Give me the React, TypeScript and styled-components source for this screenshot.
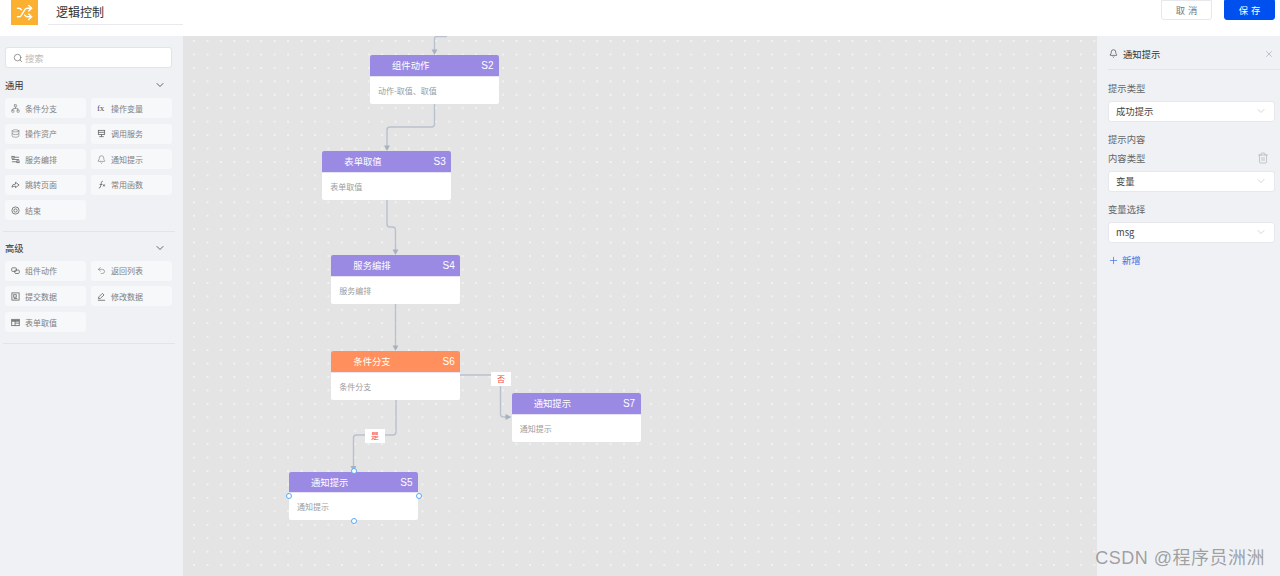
import React from "react";
import styled, { createGlobalStyle } from "styled-components";
import {
  Bell,
  ChevronDown,
  Database,
  Network,
  Plus,
  Search,
  Shuffle,
  Trash2,
  Undo2,
  X,
} from "lucide-react";

const GlobalStyle = createGlobalStyle`
  html, body {
    margin: 0;
    padding: 0;
    height: 100%;
    overflow: hidden;
    background: #eff1f5;
    font-family: "Noto Sans CJK SC", "Liberation Sans", sans-serif;
  }
`;

const LATIN = `"Liberation Sans", "Noto Sans CJK SC", sans-serif`;

const Page = styled.div`
  width: 1280px;
  height: 576px;
  display: flex;
  flex-direction: column;
  position: relative;
  overflow: hidden;
`;

const Header = styled.header`
  height: 36px;
  flex: none;
  background: #fff;
  display: flex;
  align-items: flex-start;
  padding: 0 5px 0 11px;
`;

const Logo = styled.div`
  width: 27px;
  height: 25px;
  background: #fbb030;
  color: #fff;
  display: flex;
  align-items: center;
  justify-content: center;
`;

const TitleBox = styled.div`
  width: 127px;
  height: 24px;
  margin-left: 10px;
  padding-left: 8px;
  border-bottom: 1px solid #e8eaee;
  font-size: 12px;
  line-height: 23px;
  color: #333;
`;

const HeaderActions = styled.div`
  margin-left: auto;
  display: flex;
  gap: 12px;
`;

const HeaderButton = styled.button<{ $primary?: boolean }>`
  width: 51px;
  height: 20px;
  padding: 0 0 0 3px;
  border: 1px solid ${(p) => (p.$primary ? "#0050f0" : "#e6e8ec")};
  border-radius: 0 0 3px 3px;
  background: ${(p) => (p.$primary ? "#0050f0" : "#fff")};
  color: ${(p) => (p.$primary ? "#fff" : "#777")};
  font-family: inherit;
  font-size: 9.33px;
  letter-spacing: 3px;
`;

const Body = styled.div`
  flex: 1;
  display: flex;
  min-height: 0;
`;

const Sidebar = styled.aside`
  width: 183px;
  flex: none;
  box-sizing: border-box;
  padding: 11px 8px 0 3px;
  background: #eff1f5;
`;

const SearchBox = styled.div`
  box-sizing: border-box;
  width: 167px;
  height: 21px;
  margin: 0 0 9px 2px;
  padding-left: 7px;
  display: flex;
  align-items: center;
  gap: 2px;
  background: #fff;
  border: 1px solid #e2e4e9;
  border-radius: 3px;
  font-size: 9.33px;
  color: #bbb;
  svg {
    color: #777;
  }
`;

const Section = styled.section`
  border-bottom: 1px solid #e2e4e8;
  padding-bottom: 11px;
  margin-bottom: 7.5px;
`;

const SectionHead = styled.div`
  height: 16px;
  margin-bottom: 5px;
  padding: 0 9px 0 2px;
  display: flex;
  align-items: center;
  justify-content: space-between;
  font-size: 9.33px;
  color: #333;
`;

const ToolGrid = styled.div`
  display: grid;
  grid-template-columns: 81px 81px;
  grid-auto-rows: 20px;
  gap: 5.6px 5px;
  padding-left: 2px;
`;

const Tool = styled.div`
  display: flex;
  align-items: center;
  gap: 5px;
  padding-left: 6px;
  background: #f7f8fa;
  border-radius: 3px;
  font-size: 8px;
  color: #808080;
  svg {
    flex: none;
    color: #666;
  }
`;

const Glyph = styled.svg.attrs({ viewBox: "0 0 10 10", width: 9, height: 9 })`
  fill: none;
  stroke: currentColor;
  stroke-width: 0.9;
`;

const FxMark = styled.span`
  width: 9px;
  flex: none;
  font-family: "Liberation Serif", serif;
  font-size: 9px;
  line-height: 9px;
  letter-spacing: -0.3px;
  color: #555;
`;

const Canvas = styled.main`
  flex: 1;
  position: relative;
  background-color: #e4e4e4;
  background-image: radial-gradient(circle, #fafafa 0.55px, transparent 0.9px);
  background-size: 13.44px 13.44px;
  background-position: 4.3px -1.7px;
`;

const Edges = styled.svg`
  position: absolute;
  inset: 0;
  width: 100%;
  height: 100%;
`;

const NodeCard = styled.div<{ $x: number; $y: number }>`
  position: absolute;
  left: ${(p) => p.$x}px;
  top: ${(p) => p.$y}px;
  width: 129px;
  height: 48.5px;
  display: flex;
  flex-direction: column;
  background: #fff;
  border-radius: 2px;
`;

const NodeHead = styled.div<{ $color: string }>`
  box-sizing: border-box;
  height: 21.5px;
  flex: none;
  display: flex;
  align-items: center;
  justify-content: space-between;
  padding: 0 5.5px 1px 22px;
  background: ${(p) => p.$color};
  border-radius: 2px 2px 0 0;
  border-bottom: 1px solid #e6e2f8;
  color: #fff;
  font-size: 9.33px;
`;

const NodeTag = styled.span`
  padding-top: 1px;
  font-family: ${LATIN};
  font-size: 10px;
`;

const NodeBody = styled.div`
  padding: 0 8px;
  flex: 1;
  display: flex;
  align-items: center;
  font-size: 8px;
  color: #9c9c9c;
`;

const Handle = styled.span<{ $x: number; $y: number }>`
  position: absolute;
  left: ${(p) => p.$x - 3}px;
  top: ${(p) => p.$y - 3}px;
  width: 4px;
  height: 4px;
  border: 1px solid #57a9fb;
  border-radius: 50%;
  background: #fff;
`;

const EdgeLabel = styled.span<{ $x: number; $y: number }>`
  position: absolute;
  left: ${(p) => p.$x}px;
  top: ${(p) => p.$y}px;
  width: 20px;
  height: 14px;
  background: #fff;
  color: #f5494d;
  font-size: 8px;
  line-height: 14px;
  text-align: center;
`;

const Panel = styled.aside`
  width: 183px;
  flex: none;
  box-sizing: border-box;
  padding-left: 11px;
  background: #eff1f5;
`;

const PanelHead = styled.div`
  height: 34px;
  box-sizing: border-box;
  padding: 2px 6px 0 1px;
  display: flex;
  align-items: center;
  gap: 5px;
  border-bottom: 1px solid #e2e4e8;
  font-size: 9.33px;
  color: #333;
  svg:last-child {
    margin-left: auto;
    color: #8b97b5;
  }
`;

const Form = styled.div`
  padding: 10.5px 5.5px 0 0;
  display: flex;
  flex-direction: column;
`;

const Label = styled.div<{ $gap?: boolean }>`
  height: 15px;
  margin-top: ${(p) => (p.$gap ? 4 : 0)}px;
  display: flex;
  align-items: center;
  justify-content: space-between;
  padding-right: 6px;
  font-size: 9.33px;
  color: #666;
  svg {
    color: #aaa;
  }
`;

const SelectBox = styled.div`
  box-sizing: border-box;
  height: 21px;
  margin: 5px 0 10px;
  padding: 0 7px;
  display: flex;
  align-items: center;
  justify-content: space-between;
  background: #fff;
  border: 1px solid #e6e8ec;
  border-radius: 3px;
  font-size: 9.33px;
  color: #444;
  svg {
    color: #aaa;
  }
`;

const AddLink = styled.div`
  height: 15px;
  display: flex;
  align-items: center;
  gap: 3px;
  font-size: 9.33px;
  color: #3b6fe0;
`;

const Watermark = styled.div`
  position: absolute;
  right: 15px;
  bottom: 6px;
  font-family: ${LATIN};
  font-size: 18px;
  line-height: 24px;
  letter-spacing: 0.5px;
  color: rgba(90, 90, 90, 0.55);
`;

const PURPLE = "#9b8ae4";
const ORANGE = "#ff8f5c";
const ICON = { size: 9, strokeWidth: 1.4 };

const commonTools = [
  { icon: <Network {...ICON} />, text: "条件分支" },
  { icon: <FxMark>fx</FxMark>, text: "操作变量" },
  { icon: <Database {...ICON} />, text: "操作资产" },
  {
    icon: (
      <Glyph>
        <rect x="1.5" y="1.5" width="7" height="4.5" />
        <path d="M1.5 3.7H8.5M5 6V8.5M2.5 8.5H7.5" />
      </Glyph>
    ),
    text: "调用服务",
  },
  {
    icon: (
      <Glyph>
        <rect x="1" y="1.5" width="2.5" height="2" />
        <rect x="6.5" y="6.5" width="2.5" height="2" />
        <path d="M3.5 2.5H9M1 5H9M1 7.5H6.5" />
      </Glyph>
    ),
    text: "服务编排",
  },
  { icon: <Bell {...ICON} />, text: "通知提示" },
  {
    icon: (
      <Glyph>
        <path d="M1 8Q1 4.5 5 4.5V2.5L9 5.5 5 8.5V6.8Q3 6.8 1 8Z" />
      </Glyph>
    ),
    text: "跳转页面",
  },
  {
    icon: (
      <Glyph>
        <path d="M2 9Q4 9 4.3 6L4.8 3Q5 1.3 6.5 1.3M3 5H6M6.5 7L9 5M6.5 5L9 7" />
      </Glyph>
    ),
    text: "常用函数",
  },
  {
    icon: (
      <Glyph>
        <circle cx="5" cy="5" r="4" />
        <circle cx="5" cy="5" r="1.8" />
      </Glyph>
    ),
    text: "结束",
  },
];

const advancedTools = [
  {
    icon: (
      <Glyph>
        <rect x="0.8" y="2" width="5.2" height="4" rx="1" />
        <rect x="4.2" y="4.5" width="5" height="3.8" rx="1" />
      </Glyph>
    ),
    text: "组件动作",
  },
  { icon: <Undo2 {...ICON} />, text: "返回列表" },
  {
    icon: (
      <Glyph>
        <rect x="1" y="1" width="8" height="8" />
        <rect x="3" y="3" width="2.8" height="2.8" />
        <path d="M3 7.3H7" />
      </Glyph>
    ),
    text: "提交数据",
  },
  {
    icon: (
      <Glyph>
        <path d="M1.5 7.5L2 5.5 6 1.5 7.8 3.3 3.7 7.2ZM1 9.2H9" />
      </Glyph>
    ),
    text: "修改数据",
  },
  {
    icon: (
      <Glyph>
        <rect x="0.8" y="1.5" width="8.4" height="7" />
        <path d="M0.8 3.2H9.2" strokeWidth="1.6" />
        <path d="M4.5 3V8.5M4.5 5.7H9.2" />
      </Glyph>
    ),
    text: "表单取值",
  },
];

// node and edge coordinates are relative to the canvas (183, 36)
const nodes = [
  { x: 187, y: 19, title: "组件动作", tag: "S2", desc: "动作-取值、取值", color: PURPLE },
  { x: 139.3, y: 115.2, title: "表单取值", tag: "S3", desc: "表单取值", color: PURPLE },
  { x: 148.3, y: 219, title: "服务编排", tag: "S4", desc: "服务编排", color: PURPLE },
  { x: 148.3, y: 315, title: "条件分支", tag: "S6", desc: "条件分支", color: ORANGE },
  { x: 328.7, y: 357, title: "通知提示", tag: "S7", desc: "通知提示", color: PURPLE },
  { x: 106, y: 435.8, title: "通知提示", tag: "S5", desc: "通知提示", color: PURPLE },
];

const edges = [
  "M264 0.5 H253.5 Q251.5 0.5 251.5 2.5 V15",
  "M251.5 68 V88 Q251.5 91 248.5 91 H207 Q204 91 204 94 V111",
  "M204 164 V188 Q204 191 207 191 H209.5 Q212.5 191 212.5 194 V215",
  "M212.5 268 V311",
  "M277 339 H314.5 Q317.5 339 317.5 342 V378 Q317.5 381 320.5 381 H324",
  "M213 364 V396 Q213 399 210 399 H173.5 Q170.5 399 170.5 402 V431",
];

const arrows = [
  "248.6,13.5 254.4,13.5 251.5,19",
  "201.1,109.5 206.9,109.5 204,115",
  "209.6,213.5 215.4,213.5 212.5,219",
  "209.6,309.5 215.4,309.5 212.5,315",
  "322.5,378 322.5,384 328.5,381",
  "167.6,430 173.4,430 170.5,436",
];

export default function App() {
  return (
    <Page>
      <GlobalStyle />
      <Header>
        <Logo>
          <Shuffle size={17} strokeWidth={2} />
        </Logo>
        <TitleBox>逻辑控制</TitleBox>
        <HeaderActions>
          <HeaderButton>取消</HeaderButton>
          <HeaderButton $primary>保存</HeaderButton>
        </HeaderActions>
      </Header>
      <Body>
        <Sidebar>
          <SearchBox>
            <Search size={10} strokeWidth={1.8} />
            搜索
          </SearchBox>
          <Section>
            <SectionHead>
              通用
              <ChevronDown size={12} strokeWidth={1.5} />
            </SectionHead>
            <ToolGrid>
              {commonTools.map((t) => (
                <Tool key={t.text}>
                  {t.icon}
                  {t.text}
                </Tool>
              ))}
            </ToolGrid>
          </Section>
          <Section>
            <SectionHead>
              高级
              <ChevronDown size={12} strokeWidth={1.5} />
            </SectionHead>
            <ToolGrid>
              {advancedTools.map((t) => (
                <Tool key={t.text}>
                  {t.icon}
                  {t.text}
                </Tool>
              ))}
            </ToolGrid>
          </Section>
        </Sidebar>
        <Canvas>
          <Edges>
            {edges.map((d) => (
              <path key={d} d={d} fill="none" stroke="#b8c1cd" strokeWidth={1.4} />
            ))}
            {arrows.map((p) => (
              <polygon key={p} points={p} fill="#a6b2c1" />
            ))}
          </Edges>
          {nodes.map((n) => (
            <NodeCard key={n.tag} $x={n.x} $y={n.y}>
              <NodeHead $color={n.color}>
                {n.title}
                <NodeTag>{n.tag}</NodeTag>
              </NodeHead>
              <NodeBody>{n.desc}</NodeBody>
            </NodeCard>
          ))}
          <EdgeLabel $x={308} $y={336}>否</EdgeLabel>
          <EdgeLabel $x={182} $y={392.5}>是</EdgeLabel>
          <Handle $x={170.7} $y={435} />
          <Handle $x={106} $y={460} />
          <Handle $x={235.5} $y={460} />
          <Handle $x={170.7} $y={484.5} />
        </Canvas>
        <Panel>
          <PanelHead>
            <Bell size={9} strokeWidth={1.6} />
            通知提示
            <X size={10} strokeWidth={1.3} />
          </PanelHead>
          <Form>
            <Label>提示类型</Label>
            <SelectBox>
              成功提示
              <ChevronDown size={12} strokeWidth={1} />
            </SelectBox>
            <Label>提示内容</Label>
            <Label $gap>
              内容类型
              <Trash2 size={12} strokeWidth={1.2} />
            </Label>
            <SelectBox>
              变量
              <ChevronDown size={12} strokeWidth={1} />
            </SelectBox>
            <Label>变量选择</Label>
            <SelectBox>
              msg
              <ChevronDown size={12} strokeWidth={1} />
            </SelectBox>
            <AddLink>
              <Plus size={11} strokeWidth={1.5} />
              新增
            </AddLink>
          </Form>
        </Panel>
      </Body>
      <Watermark>CSDN @程序员洲洲</Watermark>
    </Page>
  );
}
